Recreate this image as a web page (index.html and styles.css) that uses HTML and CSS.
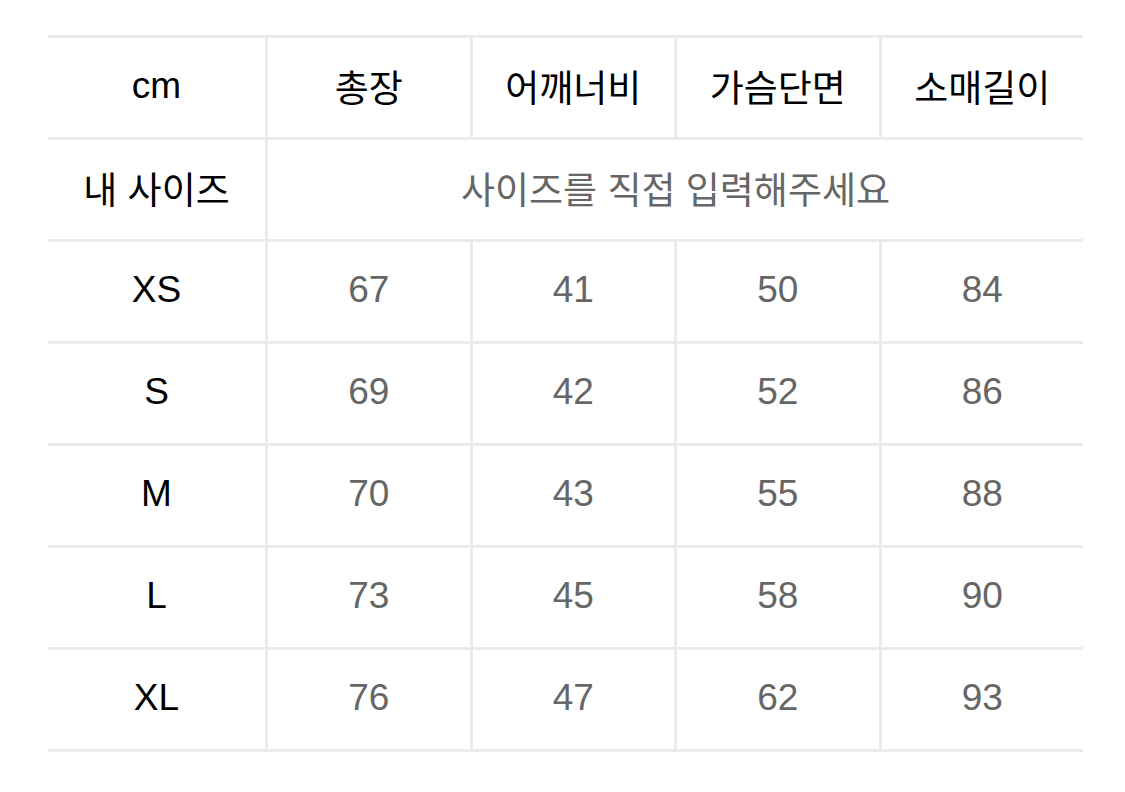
FILE: index.html
```html
<!DOCTYPE html>
<html lang="ko">
<head>
<meta charset="utf-8">
<title>Size chart</title>
<link rel="stylesheet" href="styles.css">
</head>
<body>
<div class="chart">
  <div class="row head">
    <div class="cell label">cm</div>
    <div class="cell">총장</div>
    <div class="cell">어깨너비</div>
    <div class="cell">가슴단면</div>
    <div class="cell">소매길이</div>
  </div>
  <div class="row">
    <div class="cell label">내 사이즈</div>
    <div class="cell value span">사이즈를 직접 입력해주세요</div>
  </div>
  <div class="row">
    <div class="cell label">XS</div>
    <div class="cell value">67</div>
    <div class="cell value">41</div>
    <div class="cell value">50</div>
    <div class="cell value">84</div>
  </div>
  <div class="row">
    <div class="cell label">S</div>
    <div class="cell value">69</div>
    <div class="cell value">42</div>
    <div class="cell value">52</div>
    <div class="cell value">86</div>
  </div>
  <div class="row">
    <div class="cell label">M</div>
    <div class="cell value">70</div>
    <div class="cell value">43</div>
    <div class="cell value">55</div>
    <div class="cell value">88</div>
  </div>
  <div class="row">
    <div class="cell label">L</div>
    <div class="cell value">73</div>
    <div class="cell value">45</div>
    <div class="cell value">58</div>
    <div class="cell value">90</div>
  </div>
  <div class="row">
    <div class="cell label">XL</div>
    <div class="cell value">76</div>
    <div class="cell value">47</div>
    <div class="cell value">62</div>
    <div class="cell value">93</div>
  </div>
</div>
</body>
</html>
```
FILE: styles.css
```css
html, body {
  margin: 0;
  padding: 0;
  background: #ffffff;
}
body {
  font-family: "Liberation Sans", "Noto Sans CJK KR", sans-serif;
  color: #111111;
}
.chart {
  margin: 35px 0 0 48px;
  width: 1035px;
  border-top: 3px solid #ebebeb;
}
.row {
  display: grid;
  grid-template-columns: 217px repeat(4, 1fr);
  height: 102px;
  box-sizing: border-box;
  border-bottom: 3px solid #ebebeb;
}
.cell {
  display: flex;
  align-items: center;
  justify-content: center;
  padding-bottom: 3px;
  border-left: 3px solid #ebebeb;
  font-size: 37px;
  font-weight: 400;
  color: #000000;
}
.cell.label {
  border-left: none;
}
.cell.value {
  color: #666666;
}
.cell.span {
  grid-column: 2 / span 4;
}
```
